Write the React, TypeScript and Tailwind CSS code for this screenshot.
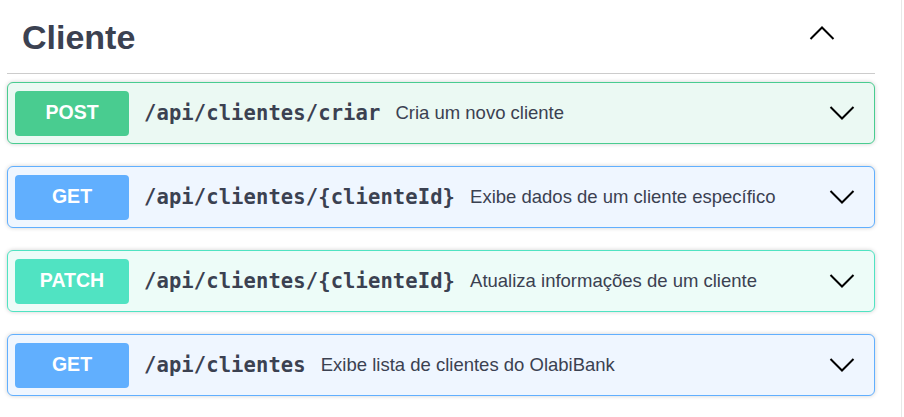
const ops = [
  {
    method: "POST",
    path: "/api/clientes/criar",
    desc: "Cria um novo cliente",
    badge: "bg-[#49cc90]",
    box: "border-[#49cc90] bg-[#ebf9f3]",
  },
  {
    method: "GET",
    path: "/api/clientes/{clienteId}",
    desc: "Exibe dados de um cliente específico",
    badge: "bg-[#61affe]",
    box: "border-[#61affe] bg-[#eff6ff]",
  },
  {
    method: "PATCH",
    path: "/api/clientes/{clienteId}",
    desc: "Atualiza informações de um cliente",
    badge: "bg-[#50e3c2]",
    box: "border-[#50e3c2] bg-[#edfcf8]",
  },
  {
    method: "GET",
    path: "/api/clientes",
    desc: "Exibe lista de clientes do OlabiBank",
    badge: "bg-[#61affe]",
    box: "border-[#61affe] bg-[#eff6ff]",
  },
];

function Chevron({ up }: { up?: boolean }) {
  return (
    <svg width="26" height="14" viewBox="0 0 26 14" fill="none" className="shrink-0">
      <path
        d={up ? "M1.5 13L13 1.5L24.5 13" : "M1.5 1L13 12.5L24.5 1"}
        stroke="#000"
        strokeWidth="2"
      />
    </svg>
  );
}

export default function App() {
  return (
    <div className="flex h-[417px] w-[904px] overflow-hidden bg-white font-['Liberation_Sans',Arial,sans-serif]">
      <div className="w-[901px] shrink-0 pl-[7px] pr-[26px]">
        <div className="flex h-[74px] items-center justify-between border-b border-[#cccccc] pl-[15px] pr-[40px]">
          <h3 className="text-[34px] font-bold leading-none text-[#3b4151]">Cliente</h3>
          <div className="mb-[8px]">
            <Chevron up />
          </div>
        </div>
        <div className="flex flex-col gap-[22px] pt-[8px]">
          {ops.map((op, i) => (
            <div
              key={i}
              className={`flex h-[62px] items-center rounded-[6px] border pl-[7px] pr-[19px] shadow-[0_0_4px_rgba(0,0,0,0.19)] ${op.box}`}
            >
              <div
                className={`flex h-[45px] w-[114px] shrink-0 items-center justify-center rounded-[4px] text-[19.5px] font-bold text-white ${op.badge}`}
              >
                {op.method}
              </div>
              <span className="ml-[15px] font-['DejaVu_Sans_Mono',monospace] text-[20.5px] font-bold tracking-[0.1px] text-[#3b4151]">
                {op.path}
              </span>
              <span className="ml-[15px] flex-1 text-[18.5px] text-[#3b4151]">{op.desc}</span>
              <Chevron />
            </div>
          ))}
        </div>
      </div>
      <div className="w-[1px] bg-[#e8e8e8]" />
    </div>
  );
}
